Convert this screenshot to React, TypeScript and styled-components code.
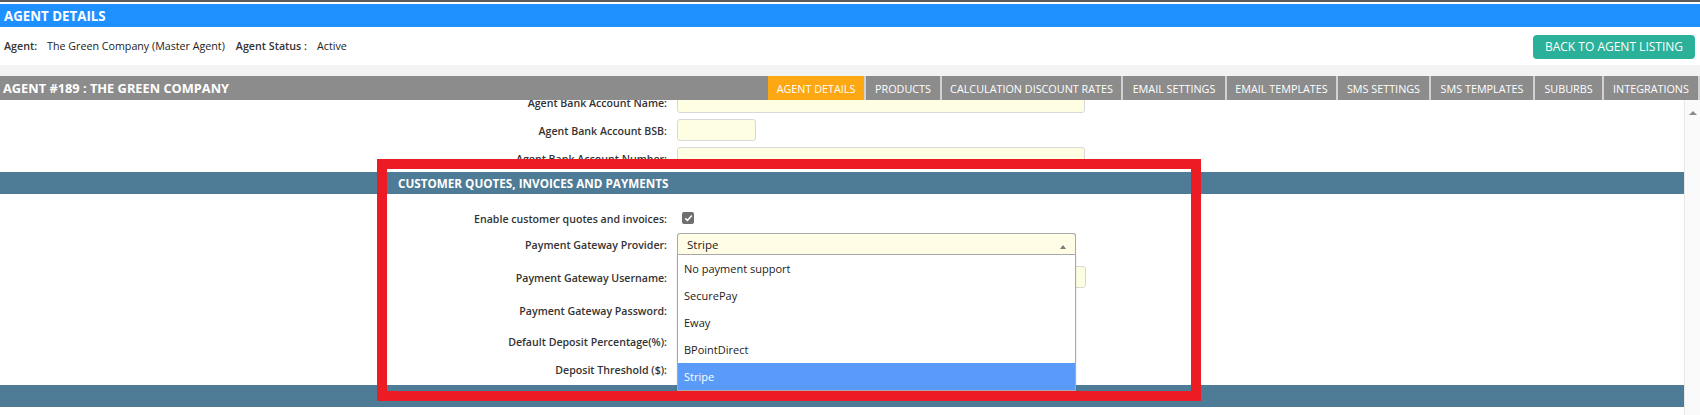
import * as React from 'react';
import styled, { createGlobalStyle } from 'styled-components';

const GlobalStyle = createGlobalStyle`
  html, body {
    margin: 0;
    padding: 0;
    background: #fff;
    font-family: 'Open Sans', 'Noto Sans', sans-serif;
  }
`;

const Page = styled.div`
  position: relative;
  width: 1700px;
  height: 415px;
  overflow: hidden;
  display: flex;
  flex-direction: column;
`;

const TopRule = styled.div`
  height: 2px;
  background: #5c5c5c;
  margin-bottom: 2px;
`;

const TitleBar = styled.div`
  height: 23px;
  background: #1e90ff;
  color: #fff;
  font-weight: 700;
  font-size: 13.3px;
  display: flex;
  align-items: center;
  padding-left: 4px;
`;

const InfoRow = styled.div`
  height: 38px;
  display: flex;
  align-items: center;
  padding: 0 5px 0 4px;
  font-size: 10.7px;
  color: #222;
`;

const InfoLabel = styled.span`
  font-weight: 600;
  color: #333;
  margin-right: 10px;
`;

const InfoValue = styled.span`
  margin-right: 11px;
`;

const BackButton = styled.button`
  margin-left: auto;
  width: 162px;
  height: 24px;
  border: 0;
  border-radius: 4px;
  background: #2bb09a;
  color: #fff;
  font-family: inherit;
  font-size: 12px;
  padding: 0;
  margin-top: 1px;
  cursor: pointer;
`;

const Strip = styled.div`
  height: 11px;
  background: #f3f3f3;
`;

const AgentBar = styled.div`
  height: 24px;
  background: #8c8c8c;
  display: flex;
  align-items: stretch;
`;

const AgentTitle = styled.div`
  color: #fff;
  font-weight: 700;
  font-size: 12.8px;
  display: flex;
  align-items: center;
  padding-left: 3px;
`;

const TabList = styled.div`
  margin-left: auto;
  display: flex;
  gap: 2px;
  padding-right: 2px;
  background: #d2d2d2;
`;

const Tab = styled.div<{ $w: number; $active?: boolean }>`
  width: ${(p) => p.$w}px;
  background: ${(p) => (p.$active ? '#fda712' : '#8c8c8c')};
  color: #fff;
  font-size: 10.8px;
  display: flex;
  align-items: center;
  justify-content: center;
  white-space: nowrap;
`;

const Body = styled.div`
  flex: 1;
  display: flex;
  min-height: 0;
`;

const ScrollArea = styled.div`
  flex: 1;
  overflow: hidden;
`;

const Scrollbar = styled.div`
  width: 15px;
  background: #fafafa;
  border-left: 1px solid #e6e6e6;
  display: flex;
  justify-content: center;
  padding-top: 11px;
`;

const UpArrow = styled.div`
  width: 0;
  height: 0;
  border-left: 4.5px solid transparent;
  border-right: 4.5px solid transparent;
  border-bottom: 4px solid #8a8a8a;
`;

const Row = styled.div<{ $top: number }>`
  display: grid;
  grid-template-columns: 667px auto;
  column-gap: 10px;
  align-items: center;
  height: 22px;
  margin-top: ${(p) => p.$top}px;
`;

const Label = styled.label`
  text-align: right;
  font-size: 10.6px;
  font-weight: 600;
  color: #333;
  padding-top: 2px;
  white-space: nowrap;
`;

const TextInput = styled.div<{ $w: number }>`
  width: ${(p) => p.$w}px;
  height: 22px;
  box-sizing: border-box;
  background: #fefee3;
  border: 1px solid #d8d8d8;
  border-radius: 3px;
`;

const SectionHeader = styled.div<{ $top: number }>`
  height: 22px;
  margin-top: ${(p) => p.$top}px;
  background: #4e7b95;
  color: #fff;
  font-weight: 700;
  font-size: 11.7px;
  display: flex;
  align-items: center;
  padding-left: 398px;
`;

const Checkbox = styled.div`
  width: 12px;
  height: 12px;
  margin-left: 5px;
  border-radius: 2px;
  background: #6f6f6f;
  display: flex;
  align-items: center;
  justify-content: center;
`;

const SelectWrap = styled.div`
  position: relative;
  width: 399px;
`;

const SelectBox = styled.div`
  height: 22px;
  box-sizing: border-box;
  background: #fffde6;
  border: 1px solid #a9a9a9;
  border-bottom: 0;
  border-radius: 3px 3px 0 0;
  display: flex;
  align-items: center;
  padding: 0 9px;
  font-size: 11.5px;
  color: #222;
`;

const Caret = styled.div`
  margin-left: auto;
  width: 0;
  height: 0;
  border-left: 3.5px solid transparent;
  border-right: 3.5px solid transparent;
  border-bottom: 4px solid #7a7a7a;
  margin-top: 5px;
`;

const Menu = styled.ul`
  position: absolute;
  left: 0;
  top: 21px;
  width: 399px;
  box-sizing: border-box;
  margin: 0;
  padding: 0;
  list-style: none;
  background: #fff;
  border: 1px solid #a9a9a9;
  box-shadow: 0 1px 2px rgba(0, 0, 0, 0.15);
  z-index: 5;
`;

const Option = styled.li<{ $selected?: boolean }>`
  height: 27px;
  display: flex;
  align-items: center;
  padding-left: 6px;
  font-size: 11px;
  color: ${(p) => (p.$selected ? '#fff' : '#222')};
  background: ${(p) => (p.$selected ? '#5a9bf9' : 'transparent')};
`;

const Annotation = styled.div`
  position: absolute;
  left: 377px;
  top: 159px;
  width: 824px;
  height: 242px;
  box-sizing: border-box;
  border: 10px solid #ec1c24;
  pointer-events: none;
  z-index: 10;
`;

const tabs = [
  { label: 'AGENT DETAILS', w: 96, active: true },
  { label: 'PRODUCTS', w: 74 },
  { label: 'CALCULATION DISCOUNT RATES', w: 179 },
  { label: 'EMAIL SETTINGS', w: 102 },
  { label: 'EMAIL TEMPLATES', w: 109 },
  { label: 'SMS SETTINGS', w: 91 },
  { label: 'SMS TEMPLATES', w: 102 },
  { label: 'SUBURBS', w: 67 },
  { label: 'INTEGRATIONS', w: 94 },
];

const providers = ['No payment support', 'SecurePay', 'Eway', 'BPointDirect', 'Stripe'];

export default function App() {
  return (
    <>
      <GlobalStyle />
      <Page>
        <TopRule />
        <TitleBar>AGENT DETAILS</TitleBar>
        <InfoRow>
          <InfoLabel>Agent:</InfoLabel>
          <InfoValue>The Green Company (Master Agent)</InfoValue>
          <InfoLabel>Agent Status :</InfoLabel>
          <InfoValue>Active</InfoValue>
          <BackButton>BACK TO AGENT LISTING</BackButton>
        </InfoRow>
        <Strip />
        <AgentBar>
          <AgentTitle>AGENT #189 : THE GREEN COMPANY</AgentTitle>
          <TabList>
            {tabs.map((t) => (
              <Tab key={t.label} $w={t.w} $active={t.active}>
                {t.label}
              </Tab>
            ))}
          </TabList>
        </AgentBar>
        <Body>
          <ScrollArea>
            <Row $top={-9}>
              <Label>Agent Bank Account Name:</Label>
              <TextInput $w={408} />
            </Row>
            <Row $top={6}>
              <Label>Agent Bank Account BSB:</Label>
              <TextInput $w={79} />
            </Row>
            <Row $top={6}>
              <Label>Agent Bank Account Number:</Label>
              <TextInput $w={408} />
            </Row>
            <SectionHeader $top={3}>CUSTOMER QUOTES, INVOICES AND PAYMENTS</SectionHeader>
            <Row $top={13}>
              <Label>Enable customer quotes and invoices:</Label>
              <Checkbox>
                <svg width="9" height="8" viewBox="0 0 9 8">
                  <path d="M1.2 4.3 L3.5 6.4 L7.8 1.4" fill="none" stroke="#fff" strokeWidth="1.6" />
                </svg>
              </Checkbox>
            </Row>
            <Row $top={4}>
              <Label>Payment Gateway Provider:</Label>
              <SelectWrap>
                <SelectBox>
                  Stripe
                  <Caret />
                </SelectBox>
                <Menu>
                  {providers.map((p) => (
                    <Option key={p} $selected={p === 'Stripe'}>
                      {p}
                    </Option>
                  ))}
                </Menu>
              </SelectWrap>
            </Row>
            <Row $top={11}>
              <Label>Payment Gateway Username:</Label>
              <TextInput $w={409} />
            </Row>
            <Row $top={11}>
              <Label>Payment Gateway Password:</Label>
              <TextInput $w={395} />
            </Row>
            <Row $top={9}>
              <Label>Default Deposit Percentage(%):</Label>
              <TextInput $w={79} />
            </Row>
            <Row $top={6}>
              <Label>Deposit Threshold ($):</Label>
              <TextInput $w={79} />
            </Row>
            <SectionHeader $top={5} />
          </ScrollArea>
          <Scrollbar>
            <UpArrow />
          </Scrollbar>
        </Body>
        <Annotation />
      </Page>
    </>
  );
}
